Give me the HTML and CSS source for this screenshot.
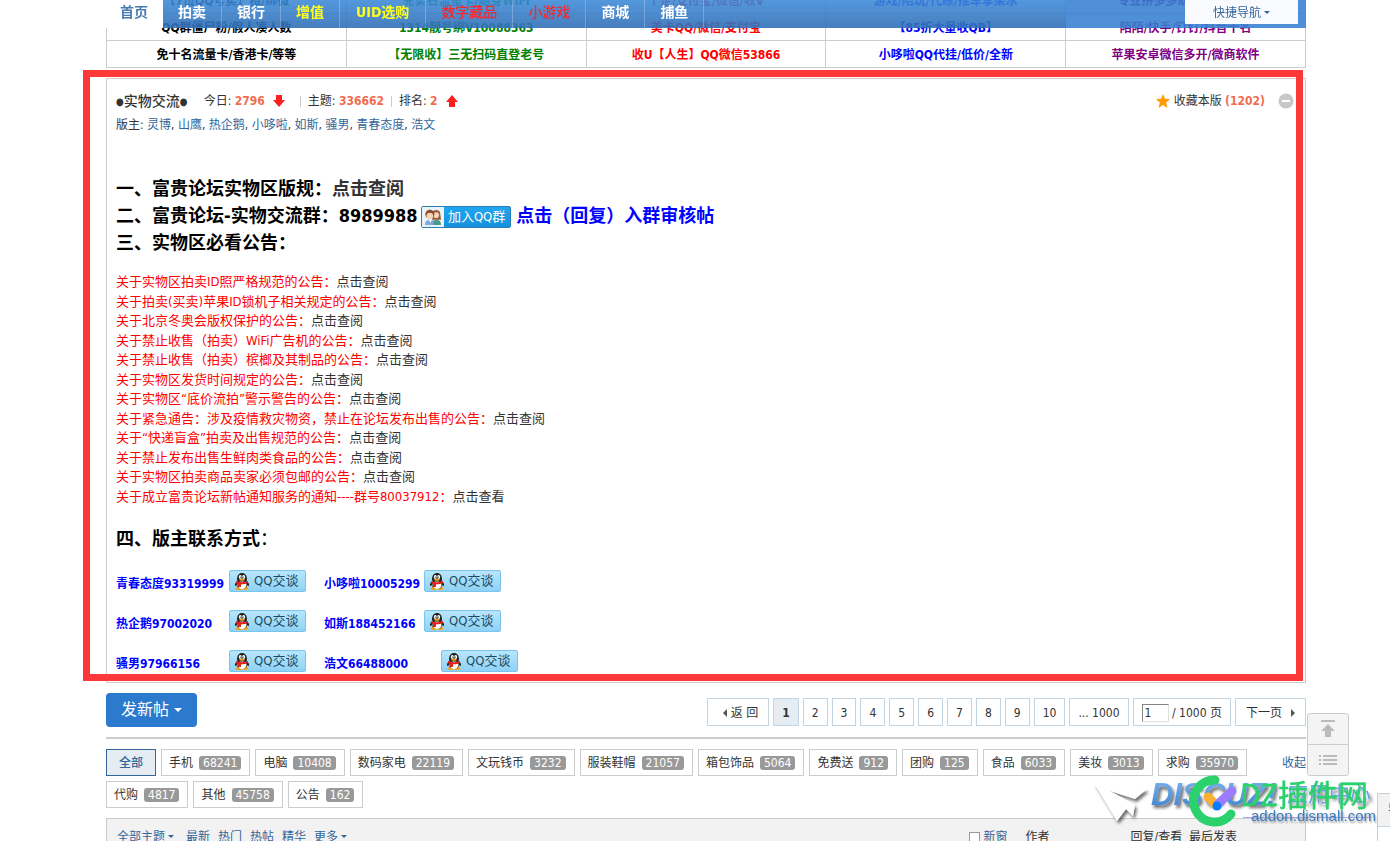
FILE: index.html
```html
<!DOCTYPE html>
<html lang="zh-CN">
<head>
<meta charset="utf-8">
<title>实物交流 - 富贵论坛</title>
<link rel="stylesheet" href="styles.css">
</head>
<body>
<svg class="defs" aria-hidden="true">
  <symbol id="penguin" viewBox="0 0 16 17">
    <path d="M4 13 1.500 15.500 3 17h4l1-1 1 1h4l1.500-1.500L12 13z" fill="#f5a21b"/>
    <path d="M3 8C1.500 9.500.500 11.500 1 13l2-1zM13 8c1.500 1.500 2.500 3.500 2 5l-2-1z" fill="#222"/>
    <ellipse cx="8" cy="11" rx="5.500" ry="5" fill="#222"/>
    <ellipse cx="8" cy="12" rx="4.500" ry="4" fill="#fff"/>
    <path d="M3 7C3 2 5 0 8 0s5 2 5 7c0 2-10 2-10 0z" fill="#222"/>
    <ellipse cx="6.300" cy="4" rx="1.500" ry="2" fill="#fff"/><ellipse cx="9.700" cy="4" rx="1.500" ry="2" fill="#fff"/>
    <circle cx="6.900" cy="4.200" r=".6"/><circle cx="9.100" cy="4.200" r=".6"/>
    <ellipse cx="8" cy="6.700" rx="2.800" ry="1" fill="#f5a21b"/>
    <path d="M2 8c3 1.500 9 1.500 12 0v2c-2 1-5 1.300-7 1.200V14H4v-3l-2-1z" fill="#e5231b"/>
  </symbol>
</svg>

<nav class="nav">
  <div class="nav-main">
    <a class="nav-item home" href="#">首页</a>
    <a class="nav-item" href="#">拍卖</a>
    <a class="nav-item" href="#">银行</a>
    <a class="nav-item yellow" href="#">增值</a>
    <a class="nav-item yellow wide" href="#">UID选购</a>
    <a class="nav-item red" href="#">数字藏品</a>
    <a class="nav-item red" href="#">小游戏</a>
    <a class="nav-item" href="#">商城</a>
    <a class="nav-item" href="#">捕鱼</a>
  </div>
  <div class="nav-side"><a class="quick" href="#">快捷导航<i class="caret"></i></a></div>
</nav>

<main class="page">
  <table class="ads">
    <tr><td class="black">【7位QQ号卖】租/绑微</td><td class="green">免实名流量卡/随身WIFI</td><td class="crimson">个企/支付宝/微信/收V</td><td class="blue">游戏/陪玩/代练/推车掌柴水</td><td class="purple">专业拼多多助力/转盘砍价</td></tr>
    <tr><td class="black">QQ群僵尸粉/假人凑人数</td><td class="green">1314靓号绑V10088363</td><td class="crimson">美卡QQ/微信/支付宝</td><td class="blue">【85折大量收QB】</td><td class="purple">陌陌/快手/钉钉/抖音十名</td></tr>
    <tr><td class="black">免十名流量卡/香港卡/等等</td><td class="green">【无限收】三无扫码直登老号</td><td class="crimson">收U【人生】QQ微信53866</td><td class="blue">小哆啦QQ代挂/低价/全新</td><td class="purple">苹果安卓微信多开/微商软件</td></tr>
  </table>

  <section class="board">
    <div class="mark"></div>
    <header class="board-head">
      <h1><small>●</small>实物交流<small>●</small></h1>
      <span class="stat">今日: <b>2796</b></span>
      <svg class="arrow" viewBox="0 0 12 12"><path d="M3 0h6v5h3L6 12 0 5h3z"/></svg>
      <i class="bar"></i>
      <span>主题: <b>336662</b></span>
      <i class="bar tight"></i>
      <span>排名: <b>2</b></span>
      <svg class="arrow" viewBox="0 0 12 12"><path d="M3 12h6V7h3L6 0 0 7h3z"/></svg>
      <a class="fav" href="#"><svg viewBox="0 0 14 14"><path d="m7 0 2 4.800 5 .4-3.800 3.300L11.400 14 7 11l-4.400 3 1.200-5.500L0 5.200l5-.4z" fill="#ff9a00"/></svg>收藏本版 <b>(1202)</b></a>
      <button class="fold" aria-label="收起"><svg viewBox="0 0 16 16"><circle cx="8" cy="8" r="7.500" fill="#c8c8c8"/><path d="M4 7h8v2H4z" fill="#fff"/></svg></button>
    </header>
    <p class="mods">版主: <a href="#">灵博</a>, <a href="#">山鹰</a>, <a href="#">热企鹅</a>, <a href="#">小哆啦</a>, <a href="#">如斯</a>, <a href="#">骚男</a>, <a href="#">青春态度</a>, <a href="#">浩文</a></p>

    <div class="heads">
      <p>一、富贵论坛实物区版规：<a class="dark" href="#">点击查阅</a></p>
      <p>二、富贵论坛-实物交流群：8989988<a class="join" href="#"><span class="join-icon"><svg viewBox="0 0 20 20"><path d="M1 19c0-4 2-6 6-6s6 2 6 6z" fill="#7fa9d6"/><path d="M10 19c0-4 1-6 4-6s5 2 5 6z" fill="#4f9a86"/><path d="M9 13V6c0-5 9-5 9 0l1 7z" fill="#9b5a34"/><circle cx="13.500" cy="8" r="3.200" fill="#f8d3b4"/><circle cx="6.500" cy="7" r="5" fill="#8a4a2c"/><circle cx="6.500" cy="9" r="3.700" fill="#f8d3b4"/><path d="m5 13 2 3 2-3z" fill="#fff"/></svg></span><span class="join-text">加入QQ群</span></a> <a class="blue" href="#">点击（回复）入群审核帖</a></p>
      <p>三、实物区必看公告：</p>
    </div>

    <ul class="notices">
      <li>关于实物区拍卖ID照严格规范的公告：<a href="#">点击查阅</a></li>
      <li>关于拍卖(买卖)苹果ID锁机子相关规定的公告：<a href="#">点击查阅</a></li>
      <li>关于北京冬奥会版权保护的公告：<a href="#">点击查阅</a></li>
      <li>关于禁止收售（拍卖）WiFi广告机的公告：<a href="#">点击查阅</a></li>
      <li>关于禁止收售（拍卖）槟榔及其制品的公告：<a href="#">点击查阅</a></li>
      <li>关于实物区发货时间规定的公告：<a href="#">点击查阅</a></li>
      <li>关于实物区“底价流拍”警示警告的公告：<a href="#">点击查阅</a></li>
      <li>关于紧急通告：涉及疫情救灾物资，禁止在论坛发布出售的公告：<a href="#">点击查阅</a></li>
      <li>关于“快递盲盒”拍卖及出售规范的公告：<a href="#">点击查阅</a></li>
      <li>关于禁止发布出售生鲜肉类食品的公告：<a href="#">点击查阅</a></li>
      <li>关于实物区拍卖商品卖家必须包邮的公告：<a href="#">点击查阅</a></li>
      <li>关于成立富贵论坛新帖通知服务的通知----群号80037912：<a href="#">点击查看</a></li>
    </ul>

    <div class="heads"><p>四、版主联系方式<span class="thin">：</span></p></div>

    <div class="contacts">
      <span>青春态度93319999</span><a class="chat" href="#"><svg><use href="#penguin"/></svg>QQ交谈</a><span>小哆啦10005299</span><a class="chat" href="#"><svg><use href="#penguin"/></svg>QQ交谈</a>
      <span>热企鹅97002020</span><a class="chat" href="#"><svg><use href="#penguin"/></svg>QQ交谈</a><span>如斯188452166</span><a class="chat" href="#"><svg><use href="#penguin"/></svg>QQ交谈</a>
      <span>骚男97966156</span><a class="chat" href="#"><svg><use href="#penguin"/></svg>QQ交谈</a><span>浩文66488000</span><a class="chat far" href="#"><svg><use href="#penguin"/></svg>QQ交谈</a>
    </div>
  </section>

  <div class="toolbar">
    <button class="post">发新帖<i class="caret"></i></button>
    <div class="pager">
      <a class="back" href="#"><i class="tri left"></i>返 回</a>
      <strong>1</strong>
      <a href="#">2</a><a href="#">3</a><a href="#">4</a><a href="#">5</a><a href="#">6</a><a href="#">7</a><a href="#">8</a><a href="#">9</a><a href="#">10</a><a href="#">... 1000</a>
      <label><input type="text" value="1" aria-label="页码"> / 1000 页</label>
      <a class="next" href="#">下一页<i class="tri right"></i></a>
    </div>
  </div>

  <div class="types">
    <div class="tags">
      <a class="all" href="#">全部</a>
      <a href="#">手机<em>68241</em></a>
      <a href="#">电脑<em>10408</em></a>
      <a href="#">数码家电<em>22119</em></a>
      <a href="#">文玩钱币<em>3232</em></a>
      <a href="#">服装鞋帽<em>21057</em></a>
      <a href="#">箱包饰品<em>5064</em></a>
      <a href="#">免费送<em>912</em></a>
      <a href="#">团购<em>125</em></a>
      <a href="#">食品<em>6033</em></a>
      <a href="#">美妆<em>3013</em></a>
      <a href="#">求购<em>35970</em></a>
      <a href="#">代购<em>4817</em></a>
      <a href="#">其他<em>45758</em></a>
      <a href="#">公告<em>162</em></a>
    </div>
    <a class="collapse" href="#">收起</a>
  </div>

  <div class="threads">
    <div class="filters"><a class="topic" href="#">全部主题<i class="caret"></i></a><a href="#">最新</a><a href="#">热门</a><a href="#">热帖</a><a href="#">精华</a><a href="#">更多<i class="caret"></i></a></div>
    <label class="newwin"><input type="checkbox">新窗</label>
    <span class="author">作者</span>
    <span class="last">回复/查看&nbsp; 最后发表</span>
  </div>
</main>

<div class="scrolltop">
  <button aria-label="返回顶部"><svg viewBox="0 0 16 18"><path d="M1 0h14v2H1zM8 4l7 7h-4v6H5v-6H1z"/></svg></button>
  <button aria-label="返回列表"><svg viewBox="0 0 18 12"><path d="M0 1h2v2H0zM4 1h14v2H4zM0 5h2v2H0zM4 5h14v2H4zM0 9h2v2H0zM4 9h14v2H4z"/></svg></button>
</div>

<aside class="side"><div class="side-head">导</div></aside>

<svg class="logo" viewBox="1090 772 290 60">
  <defs>
    <filter id="shade" x="-20%" y="-20%" width="150%" height="160%"><feDropShadow dx="2" dy="3" stdDeviation="1.500" flood-color="#222" flood-opacity=".65"/></filter>
    <linearGradient id="sky" x1="0" y1="0" x2="0" y2="1"><stop offset="0" stop-color="#7eb4ee"/><stop offset="1" stop-color="#3c7fcc"/></linearGradient>
  </defs>
  <g filter="url(#shade)">
    <path d="M1094 783l53 6-12 10-25-8 25 14-2 11-7-7-9 12z" fill="#fff"/>
    <text class="logo-en" x="1151" y="805" fill="url(#sky)">DISCUZ!</text>
    <text class="logo-cn" x="1287" y="801">应用中心</text>
  </g>
  <path d="M1243 817.500h128" stroke="#b9a6f5" stroke-width="1"/>
  <g fill="none" stroke-linecap="round">
    <path d="M1215 780a21 21 0 1 0 16 34" stroke="#2bd16c" stroke-width="9"/>
    <path d="M1208 797l8 8" stroke="#fbb034" stroke-width="9"/>
    <path d="M1218 804l14-13" stroke="#9b7bff" stroke-width="9"/>
  </g>
  <circle cx="1217" cy="806" r="4.500" fill="#0a7cff"/>
  <text class="logo-dz" x="1240" y="806">DZ插件网</text>
  <text class="logo-url" x="1251" y="821">addon.dismall.com</text>
</svg>
</body>
</html>
```
FILE: styles.css
```css
* { box-sizing: border-box; }
html, body { height: 100%; }
body {
  margin: 0;
  overflow: hidden;
  background: #fff;
  color: #333;
  font: 12px/18px "DejaVu Sans Condensed", "Noto Sans CJK SC", sans-serif;
}
a { color: inherit; text-decoration: none; }
p, h1, ul { margin: 0; padding: 0; list-style: none; }
button { font: inherit; border: 0; padding: 0; background: none; cursor: pointer; }
.defs { position: absolute; width: 0; height: 0; }
.caret {
  display: inline-block;
  margin-left: 3px;
  vertical-align: 3px;
  border: 3px solid transparent;
  border-top-color: currentColor;
  border-bottom: 0;
}

/* navigation */
.nav {
  position: fixed;
  z-index: 5;
  top: 0;
  left: 106px;
  right: 84px;
  height: 28px;
  display: flex;
  color: #fff;
}
.nav-main {
  flex: 4;
  display: flex;
  background: linear-gradient(rgba(60, 137, 215, .88), rgba(50, 112, 183, .9));
}
.nav-side { flex: 1; background: rgba(54, 128, 209, .88); display: flex; justify-content: flex-end; }
.nav-item {
  padding: 0 15px;
  border-right: 1px solid rgba(255, 255, 255, .25);
  font-size: 14px;
  line-height: 24px;
  font-weight: bold;
}
.nav-item.home { padding: 0 14px; background: #fff; color: #4a7bb0; }
.nav-item.yellow { color: #ff2; }
.nav-item.wide { padding: 0 16px; }
.nav-item.red { color: #f5282e; font-weight: 500; }
.quick {
  width: 113px;
  height: 24px;
  margin-right: 8px;
  background: rgba(255, 255, 255, .97);
  color: #336699;
  text-align: center;
  line-height: 26px;
}

.page { padding: 0 84px 0 106px; }

/* advert table */
.ads {
  width: 100%;
  margin-top: -14px;
  border-collapse: collapse;
  table-layout: fixed;
  text-align: center;
  font-weight: bold;
}
.ads td { height: 27px; padding: 2px 0 0; border: 1px solid #ccc; }
.black { color: #000; }
.green { color: #008000; }
.crimson { color: #f00; }
.blue { color: #00f; }
.purple { color: #800080; }

/* board panel */
.board {
  position: relative;
  margin-top: 10px;
  padding: 12px 9px 10px;
  border: 1px solid #ccc;
}
.mark {
  position: absolute;
  z-index: 2;
  top: -9px;
  left: -24px;
  right: 2px;
  bottom: 1px;
  border: 7px solid #fd3838;
  pointer-events: none;
}
.board-head { display: flex; align-items: center; height: 20px; white-space: pre; }
.board-head h1 { font-size: 14px; line-height: 20px; font-weight: 500; margin-right: 16px; }
.board-head small { font-size: 10px; vertical-align: 1px; }
.board-head b { color: #f26c4f; }
.arrow { width: 12px; height: 12px; margin-left: 8px; fill: #fb2020; }
.bar { width: 1px; height: 11px; margin: 0 7px 0 15px; background: #ccc; }
.bar.tight { margin-left: 7px; }
.fav { margin-left: auto; display: flex; align-items: center; }
.fav svg { width: 14px; height: 14px; margin-right: 4px; }
.fold { width: 16px; height: 16px; margin: 0 2px 0 13px; }
.fold svg { display: block; width: 16px; height: 16px; }
.mods { margin-top: 5px; }
.mods a { color: #336699; }
.heads { margin-top: 41px; color: #000; font-size: 18px; line-height: 27px; font-weight: bold; }
.heads p { height: 27px; }
.heads .dark { color: #333; }
.thin { font-weight: normal; }
.join {
  display: inline-flex;
  width: 90px;
  height: 22px;
  margin-left: 3px;
  vertical-align: -5px;
  border: 1px solid #2d7eb5;
  border-radius: 2px;
  background: linear-gradient(#20a6ee, #1591dc);
  color: #fff;
  font-size: 13px;
  line-height: 20px;
  font-weight: normal;
}
.join-icon { width: 22px; background: #e8f3fb; text-align: center; }
.join-icon svg { display: block; width: 18px; height: 18px; margin: 1px 2px; }
.join-text { flex: 1; text-align: center; }
.notices { margin-top: 16px; color: #f00; font-size: 13px; line-height: 1.5; }
.notices a { color: #333; }
.notices + .heads { margin-top: 19px; }
.contacts {
  display: grid;
  grid-template-columns: 113px 95px 100px auto;
  grid-auto-rows: 22px;
  row-gap: 18px;
  margin-top: 18px;
  color: #00f;
  font-weight: bold;
  line-height: 28px;
  white-space: nowrap;
}
.chat {
  display: flex;
  align-items: center;
  width: 77px;
  height: 22px;
  padding-left: 4px;
  border: 1px solid #78c4ee;
  border-radius: 2px;
  background: linear-gradient(#b8e6fc, #8fd2f4);
  color: #1c4a63;
  font-size: 13px;
  font-weight: normal;
  line-height: 20px;
}
.chat svg { width: 16px; height: 17px; margin-right: 4px; }
.chat.far { margin-left: 17px; }

/* toolbar and pager */
.toolbar {
  display: flex;
  justify-content: space-between;
  padding: 10px 0;
  border-bottom: 2px solid #ccc;
}
.post {
  height: 34px;
  padding: 0 15px;
  border-radius: 4px;
  background: #2b7acd;
  color: #fff;
  font-size: 16px;
}
.post .caret { border-width: 4px; border-bottom: 0; margin-left: 5px; }
.pager { display: flex; gap: 4px; margin-top: 5px; }
.pager > * {
  height: 28px;
  padding: 0 8px;
  border: 1px solid #c2d5e3;
  line-height: 28px;
}
.pager strong { background: #e5edf2; }
.pager .back { padding: 0 10px 0 15px; }
.pager .next { padding: 0 10px; }
.pager input {
  width: 27px;
  height: 18px;
  padding: 0 2px;
  border: 1px solid;
  border-color: #848484 #e0e0e0 #e0e0e0 #848484;
  color: #333;
  font: inherit;
}
.tri { display: inline-block; border: 4px solid transparent; }
.tri.left { border-left: 0; border-right-color: #555; margin-right: 4px; }
.tri.right { border-right: 0; border-left-color: #555; margin-left: 9px; }

/* type tags */
.types { display: flex; margin-top: 10px; }
.tags { flex: 1; display: flex; flex-wrap: wrap; gap: 5px; }
.tags a {
  display: flex;
  align-items: center;
  height: 27px;
  padding: 0 8px 0 7px;
  border: 1px solid #ccc;
}
.tags .all { padding: 0 12px; border-color: #336699; background: #e5edf2; color: #336699; font-weight: 500; }
.tags em {
  margin-left: 6px;
  padding: 0 4px;
  border-radius: 3px;
  background: #999;
  color: #fff;
  font-style: normal;
  line-height: 14px;
}
.collapse { color: #336699; line-height: 28px; }

/* thread list header */
.threads {
  display: flex;
  height: 40px;
  margin-top: 10px;
  padding: 9px 68px 0 10px;
  border: 1px solid #ccc;
  background: #f2f2f2;
}
.filters { flex: 1; display: flex; gap: 8px; color: #336699; }
.topic { margin-right: 4px; }
.newwin { display: flex; align-items: center; height: 18px; color: #336699; }
.newwin input { appearance: none; width: 11px; height: 11px; margin: 0 3px 0 0; border: 1px solid #999; background: #fff; }
.author { margin: 0 81px 0 18px; }

/* floating controls */
.scrolltop {
  position: fixed;
  right: 41px;
  bottom: 65px;
  width: 42px;
  border: 1px solid #ccc;
  border-radius: 3px;
  background: #f4f4f4;
}
.scrolltop button { display: flex; align-items: center; justify-content: center; width: 100%; height: 30px; }
.scrolltop button + button { height: 31px; border-top: 1px solid #ccc; }
.scrolltop svg { width: 18px; height: 18px; fill: #bbb; }
.side {
  position: fixed;
  right: 0;
  bottom: 0;
  width: 13px;
  height: 48px;
  overflow: hidden;
  border: solid #ccc;
  border-width: 1px 0 0 1px;
  background: #fff;
}
.side-head { height: 33px; padding-left: 10px; border-bottom: 1px solid #c2d5e3; background: #f2f2f2; line-height: 33px; }

.logo { position: fixed; right: 10px; bottom: 9px; width: 290px; height: 60px; pointer-events: none; }
.logo-en { font: italic bold 31px "Liberation Sans", sans-serif; }
.logo-cn { font: 21px "Noto Sans CJK SC", sans-serif; fill: #6fa0e8; }
.logo-dz { font: 30px "Noto Sans CJK SC", sans-serif; fill: #2bd16c; stroke: #2bd16c; stroke-width: 0.5; }
.logo-url { font: 15px "Liberation Sans", sans-serif; fill: #3a7cbd; text-shadow: 1px 2px 2px #999; }
```
